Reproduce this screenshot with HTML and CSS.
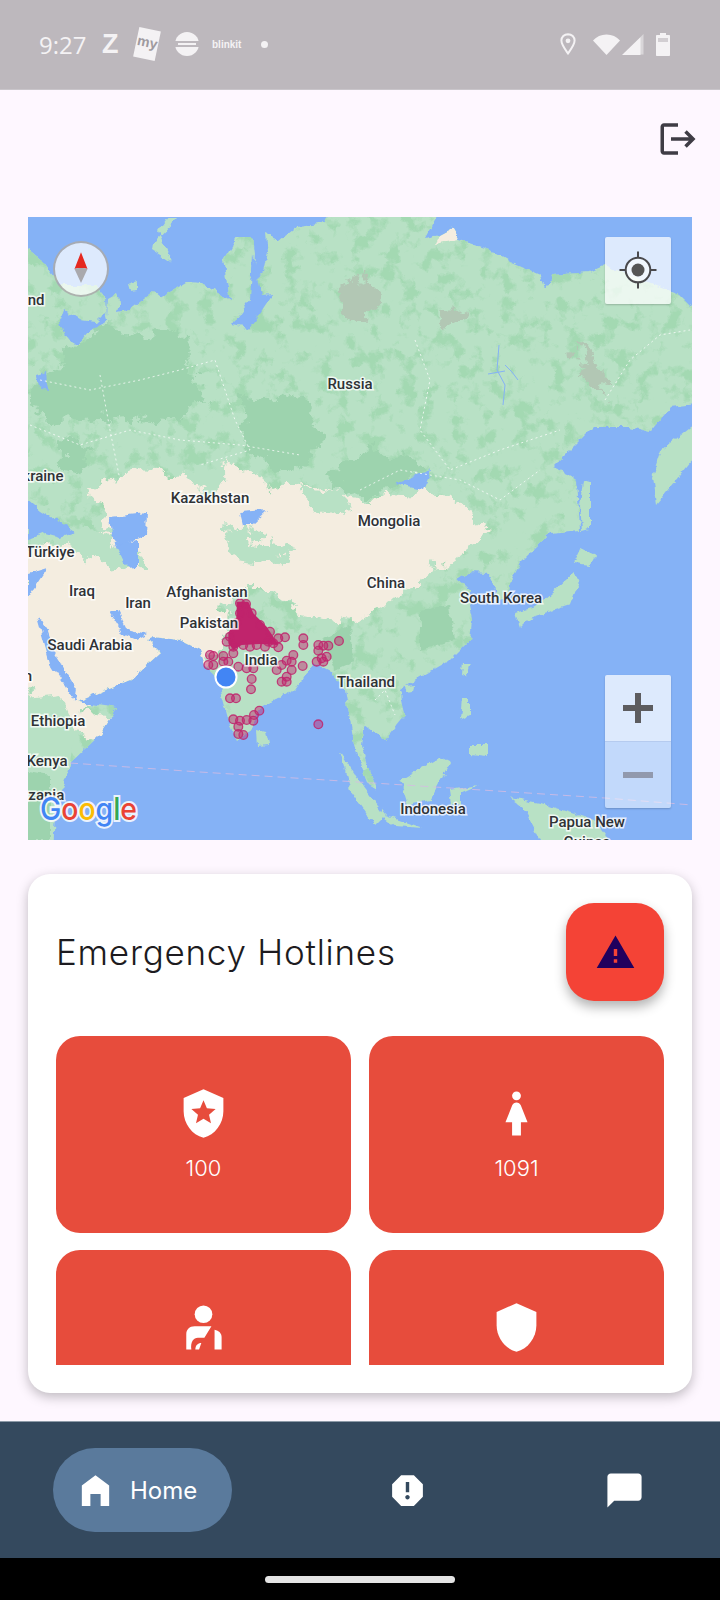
FILE: index.html
```html
<!DOCTYPE html>
<html lang="en">
<head>
    <meta charset="UTF-8">
    <meta name="viewport" content="width=device-width, initial-scale=1.0">
    <title>Emergency Hotlines</title>
    <link rel="stylesheet" href="styles.css">
</head>
<body>
    <div class="status-bar">
        <span class="time">9:27</span>
        <span class="st-z">Z</span>
        <span class="st-my">my</span>
        <svg class="st-ola" viewBox="0 0 24 24"><circle cx="12" cy="12" r="12" fill="#f4f2f4"/><rect x="0" y="9" width="24" height="6" fill="#bdb8bd"/><rect x="3" y="11" width="18" height="2" fill="#f4f2f4"/></svg>
        <span class="st-blinkit">blinkit</span>
        <span class="st-dot"></span>
        <span class="st-spacer"></span>
        <svg class="st-pin" viewBox="0 0 16 22"><path fill="none" stroke="#f4f2f4" stroke-width="2" d="M8 1.200C4.200 1.200 1.400 4 1.400 7.600c0 4.200 4.200 9.400 6.600 12.800 2.400-3.400 6.600-8.600 6.600-12.800C14.600 4 11.800 1.200 8 1.200z"/><circle cx="8" cy="7.800" r="2.400" fill="#f4f2f4"/></svg>
        <svg class="st-wifi" viewBox="0 0 27 21"><path fill="#f4f2f4" d="M13.500 21L0 6.500C3.500 2.500 8 .5 13.500.5S23.500 2.500 27 6.500z"/></svg>
        <svg class="st-signal" viewBox="0 0 22 22"><path fill="#d9d6d9" d="M21.500 1L1 21.500h20.500z"/><path fill="#f4f2f4" d="M18.500 4.200V22H0z"/></svg>
        <svg class="st-battery" viewBox="0 0 14 23"><path fill="#f4f2f4" d="M4 0h6v2h3c.6 0 1 .4 1 1v19c0 .6-.4 1-1 1H1c-.6 0-1-.4-1-1V3c0-.6.4-1 1-1h3z"/><rect x="2" y="5" width="10" height="4" fill="#d2ced2"/></svg>
    </div>

    <main class="content">
        <div class="top-row">
            <svg class="logout" viewBox="0 0 24 24"><path d="M17 7l-1.410 1.410L18.170 11H8v2h10.170l-2.580 2.580L17 17l5-5zM4 5h8V3H4c-1.100 0-2 .9-2 2v14c0 1.100.9 2 2 2h8v-2H4V5z"/></svg>
        </div>

        <div class="map">
            <svg class="map-svg" viewBox="28 217 664 623">
                <defs>
                    <filter id="rough" filterUnits="userSpaceOnUse" x="0" y="190" width="720" height="680">
                        <feTurbulence type="fractalNoise" baseFrequency="0.11" numOctaves="3" seed="4"/>
                        <feDisplacementMap in="SourceGraphic" scale="7" xChannelSelector="R" yChannelSelector="G"/>
                    </filter>
                    <filter id="rough-big" filterUnits="userSpaceOnUse" x="0" y="190" width="720" height="680">
                        <feTurbulence type="fractalNoise" baseFrequency="0.05" numOctaves="4" seed="12"/>
                        <feDisplacementMap in="SourceGraphic" scale="30" xChannelSelector="R" yChannelSelector="G"/>
                    </filter>
                    <filter id="mottle" filterUnits="userSpaceOnUse" x="0" y="190" width="720" height="680" color-interpolation-filters="sRGB">
                        <feTurbulence type="fractalNoise" baseFrequency="0.06" numOctaves="4" seed="9"/>
                        <feColorMatrix values="0 0 0 0 0.64  0 0 0 0 0.85  0 0 0 0 0.70  0 0 0 6 -3.100"/>
                    </filter>
                    <polygon id="eurasia" points="20,245 28,250 43,262 60,285 95,285 106,298 107,317 108,298 117,293 120,300 117,312 130,310 153,292 160,298 187,282 203,283 230,300 223,260 237,237 253,237 255,253 253,290 263,272 267,253 265,233 280,240 297,227 327,223 325,205 443,205 425,238 440,235 453,228 460,240 490,250 510,262 540,275 545,288 553,275 590,272 605,265 640,280 680,295 705,320 705,403 670,407 650,432 630,427 593,427 553,467 567,473 577,480 580,530 550,533 520,563 512,578 507,597 497,600 494,585 488,573 470,572 458,580 470,590 468,600 472,620 470,640 450,660 415,680 400,690 405,715 385,740 365,725 362,745 376,790 368,785 355,750 350,720 345,690 330,672 313,663 295,690 260,707 250,730 238,741 230,725 222,695 217,677 205,665 200,650 180,640 153,637 147,640 160,653 130,680 77,702 117,708 100,735 70,763 55,813 53,850 20,850"/>
                    <clipPath id="land-clip"><use href="#eurasia"/></clipPath>
                </defs>

                <rect class="ocean" x="28" y="217" width="664" height="623"/>

                <g filter="url(#rough)">
                    <use href="#eurasia" class="land"/>
                    <g clip-path="url(#land-clip)">
                        <rect x="20" y="205" width="690" height="650" filter="url(#mottle)"/>
                        <g filter="url(#rough-big)">
                            <polygon class="forest" points="73,350 100,327 187,337 203,403 180,423 120,417 60,423 30,410 37,383"/>
                            <polygon class="forest" points="240,400 300,395 325,440 300,470 250,455"/>
                            <polygon class="forest" points="330,470 380,445 420,470 390,490 345,495"/>
                            <polygon class="forest" points="60,440 90,445 80,470 60,465"/>
                            <polygon class="rock" points="340,285 370,275 385,295 365,325 345,315"/>
                            <polygon class="rock" points="575,340 600,370 610,395 585,380"/>
                            <polygon class="rock" points="435,310 445,300 470,310 450,330"/>
                            <polygon class="cream" points="92,490 103,480 200,467 237,463 280,490 320,487 360,500 420,490 450,493 470,520 493,530 460,553 420,580 393,600 360,622 337,620 300,612 270,590 240,590 225,600 222,640 205,665 175,650 150,650 165,660 130,690 77,712 125,715 105,740 70,730 40,700 20,690 20,550 60,545 110,530"/>
                            <polygon class="land" points="180,470 220,462 232,485 205,495"/>
                            <polygon class="land" points="225,525 265,540 300,548 275,565 235,560"/>
                            <polygon class="land" points="300,490 345,495 350,510 315,512"/>
                            <polygon class="land" points="60,530 110,535 118,545 150,560 130,572 100,560 70,550"/>
                        </g>
                        <polygon class="cream" points="440,235 453,228 460,240 435,245"/>
                        <polygon class="land" points="20,700 60,695 75,730 70,763 55,813 53,850 20,850"/>
                        <polygon class="forest" points="22,770 50,775 50,840 22,840"/>
                        <polygon class="land" points="222,640 270,640 305,640 320,665 295,695 260,712 240,745 225,690"/>
                        <polygon class="forest" points="322,640 350,625 353,662 335,670"/>
                        <polygon class="forest" points="420,610 450,605 455,640 420,650"/>
                    </g>

                    <polygon class="water" points="64,310 80,320 95,322 105,312 107,320 88,332 77,345 65,338 60,322"/>
                    <polygon class="water" points="253,255 262,296 272,295 250,328 232,325 250,300"/>
                    <polygon class="water" points="115,543 138,540 138,567 127,568"/>
                    <polygon class="water" points="110,517 147,513 146,535 120,545 112,535"/>
                    <polygon class="water" points="28,500 40,510 75,532 60,537 45,533 28,540"/>
                    <polygon class="water" points="28,573 48,567 28,597"/>
                    <polygon class="water" points="108,610 117,610 127,630 147,635 137,640 123,634"/>
                    <polygon class="water" points="37,617 43,620 53,650 77,690 75,702 50,663"/>
                    <polygon class="water" points="240,512 268,510 252,525 243,525"/>
                    <polygon class="water" points="423,490 432,470 425,472 395,484"/>
                    <polygon class="water" points="36,375 46,372 48,390 38,388"/>

                    <polygon class="land" points="153,243 177,218 168,218 158,232 172,263 152,250"/>
                    <polygon class="land" points="128,284 137,281 137,290 130,291"/>
                    <polygon class="land" points="583,480 590,482 590,528 582,530 580,505"/>
                    <polygon class="land" points="653,477 662,450 700,420 700,450 657,503"/>
                    <polygon class="land" points="515,613 535,607 575,572 578,585 570,605 530,618 520,628"/>
                    <polygon class="land" points="573,563 580,548 595,555 590,565"/>
                    <polygon class="land" points="257,730 265,732 268,745 258,746"/>
                    <polygon class="land" points="340,752 355,775 385,815 375,825 350,790"/>
                    <polygon class="land" points="400,780 440,757 450,762 430,800 408,805"/>
                    <polygon class="land" points="380,815 400,820 423,828 395,826"/>
                    <polygon class="land" points="450,790 478,785 460,793 460,805 452,803"/>
                    <polygon class="land" points="510,797 540,803 593,820 613,845 540,840 523,807"/>
                    <polygon class="land" points="462,697 470,697 470,715 460,720"/>
                    <polygon class="land" points="470,745 487,745 487,757 470,755"/>
                    <polygon class="land" points="463,663 470,663 466,676 462,675"/>
                    <polygon class="land" points="405,686 415,685 414,692 406,693"/>
                </g>

                <polyline class="river" points="499,345 497,370 505,385 503,405"/>
                <polyline class="river" points="505,365 512,372 518,380"/>
                <polyline class="river" points="488,374 505,371"/>
                <polyline class="border" points="40,380 90,390 140,380 180,370 215,360 235,420 250,450 200,465"/>
                <polyline class="border" points="30,425 80,445 130,430 180,440 240,445 300,455"/>
                <polyline class="border" points="100,375 110,430 120,480"/>
                <polyline class="border" points="415,340 430,380 420,430 450,470 500,450 560,430"/>
                <polyline class="border" points="360,490 400,470 460,480 500,500 540,470"/>
                <polyline class="border" points="605,400 630,360 660,335 690,330"/>
                <polyline class="border" points="375,700 385,690 395,715"/>
                <polyline class="equator" points="70,763 200,772 373,783 605,798 692,805"/>

                <g transform="translate(20 530) scale(.33333)">
                    <polygon class="cluster-fill" points="650,215 685,215 700,250 740,290 760,320 775,345 720,342 665,345 640,360 625,340 625,310 650,260"/>
                    <g class="cluster">
                        <circle cx="570" cy="375" r="13"/><circle cx="580" cy="378" r="13"/><circle cx="610" cy="378" r="13"/><circle cx="565" cy="405" r="13"/><circle cx="580" cy="405" r="13"/><circle cx="610" cy="395" r="13"/><circle cx="625" cy="395" r="13"/><circle cx="655" cy="410" r="13"/><circle cx="680" cy="415" r="13"/><circle cx="700" cy="415" r="13"/>
                        <circle cx="695" cy="447" r="13"/><circle cx="693" cy="478" r="13"/><circle cx="630" cy="505" r="13"/><circle cx="648" cy="505" r="13"/><circle cx="718" cy="542" r="13"/><circle cx="702" cy="555" r="13"/><circle cx="700" cy="572" r="13"/><circle cx="680" cy="570" r="13"/><circle cx="660" cy="572" r="13"/><circle cx="640" cy="568" r="13"/>
                        <circle cx="655" cy="590" r="13"/><circle cx="655" cy="612" r="13"/><circle cx="670" cy="615" r="13"/><circle cx="795" cy="322" r="13"/><circle cx="775" cy="325" r="13"/><circle cx="775" cy="352" r="13"/><circle cx="850" cy="325" r="13"/><circle cx="850" cy="345" r="13"/><circle cx="820" cy="375" r="13"/><circle cx="815" cy="395" r="13"/>
                        <circle cx="800" cy="392" r="13"/><circle cx="785" cy="405" r="13"/><circle cx="815" cy="420" r="13"/><circle cx="770" cy="420" r="13"/><circle cx="800" cy="440" r="13"/><circle cx="785" cy="455" r="13"/><circle cx="800" cy="455" r="13"/><circle cx="848" cy="408" r="13"/><circle cx="895" cy="345" r="13"/><circle cx="910" cy="347" r="13"/>
                        <circle cx="925" cy="347" r="13"/><circle cx="895" cy="362" r="13"/><circle cx="920" cy="380" r="13"/><circle cx="905" cy="385" r="13"/><circle cx="890" cy="395" r="13"/><circle cx="910" cy="395" r="13"/><circle cx="957" cy="333" r="13"/><circle cx="895" cy="583" r="13"/>
                        <circle cx="640" cy="350" r="13"/><circle cx="670" cy="345" r="13"/><circle cx="710" cy="345" r="13"/><circle cx="745" cy="335" r="13"/><circle cx="640" cy="370" r="13"/><circle cx="660" cy="220" r="13"/><circle cx="678" cy="222" r="13"/>
                        <circle cx="630" cy="320" r="13"/><circle cx="650" cy="280" r="13"/><circle cx="660" cy="250" r="13"/><circle cx="695" cy="250" r="13"/><circle cx="720" cy="285" r="13"/><circle cx="750" cy="305" r="13"/><circle cx="735" cy="350" r="13"/><circle cx="690" cy="350" r="13"/><circle cx="760" cy="340" r="13"/><circle cx="620" cy="335" r="13"/>
                    </g>
                </g>

                <circle class="me" cx="226" cy="677" r="10.500"/>

                <text class="label" x="350" y="389">Russia</text>
                <text class="label" x="210" y="503">Kazakhstan</text>
                <text class="label" x="389" y="526">Mongolia</text>
                <text class="label" x="386" y="588">China</text>
                <text class="label" x="501" y="603">South Korea</text>
                <text class="label" x="366" y="687">Thailand</text>
                <text class="label" x="433" y="814">Indonesia</text>
                <text class="label" x="587" y="827">Papua New</text>
                <text class="label" x="587" y="847">Guinea</text>
                <text class="label" x="207" y="597">Afghanistan</text>
                <text class="label" x="209" y="628">Pakistan</text>
                <text class="label" x="138" y="608">Iran</text>
                <text class="label" x="82" y="596">Iraq</text>
                <text class="label" x="90" y="650">Saudi Arabia</text>
                <text class="label" x="261" y="665">India</text>
                <text class="label" x="58" y="726">Ethiopia</text>
                <text class="label" x="47" y="766">Kenya</text>
                <text class="label" x="34" y="800">Tanzania</text>
                <text class="label" x="50" y="557">Türkiye</text>
                <text class="label" x="6" y="618">Egypt</text>
                <text class="label" x="11" y="681">Sudan</text>
                <text class="label" x="20" y="305">Finland</text>
                <text class="label" x="38" y="481">Ukraine</text>

                <text class="google" x="40" y="820" textLength="97" lengthAdjust="spacingAndGlyphs"><tspan class="g-blue">G</tspan><tspan class="g-red">o</tspan><tspan class="g-yellow">o</tspan><tspan class="g-blue">g</tspan><tspan class="g-green">l</tspan><tspan class="g-red">e</tspan></text>
            </svg>

            <div class="compass">
                <svg viewBox="0 0 56 56"><path fill="#e5281f" d="M28 10l-7 18c4-1.500 10-1.500 14 0z"/><path fill="#a9a9ad" d="M21 28c4-1.500 10-1.500 14 0l-7 15z"/></svg>
            </div>
            <div class="map-btn locate">
                <svg viewBox="0 0 40 40"><circle cx="20" cy="20" r="12.300" fill="rgba(255,255,255,0.6)" stroke="#4a4a4d" stroke-width="2"/><circle cx="20" cy="20" r="6.500" fill="#555"/><path stroke="#4a4a4d" stroke-width="2" d="M20 1.500v6M20 32.500v6M1.500 20h6M32.500 20h6"/></svg>
            </div>
            <div class="zoom-ctrl">
                <div class="zoom-in"><span class="bar-h"></span><span class="bar-v"></span></div>
                <div class="zoom-out"><span class="bar-h"></span></div>
            </div>
        </div>

        <section class="card">
            <div class="card-head">
                <h2>Emergency Hotlines</h2>
                <button class="fab">
                    <svg viewBox="0 0 24 24"><path d="M1 21h22L12 2 1 21zm12-3h-2v-2h2v2zm0-4h-2v-4h2v4z"/></svg>
                </button>
            </div>
            <div class="hotlines">
                <div class="tile">
                    <svg viewBox="0 0 24 24"><path d="M12 1L3 5v6c0 5.550 3.840 10.740 9 12 5.160-1.260 9-6.450 9-12V5l-9-4zm2.500 11.590.9 3.880-3.400-2.050-3.400 2.050.9-3.870-3-2.590 3.960-.34L12 6.020l1.540 3.640 3.960.34-3 2.590z"/></svg>
                    <span>100</span>
                </div>
                <div class="tile">
                    <svg viewBox="0 0 24 24"><circle cx="12" cy="4" r="2"/><path d="M13.940 8.310C13.620 7.520 12.850 7 12 7s-1.620.52-1.940 1.310L7 16h3v6h4v-6h3l-3.060-7.690z"/></svg>
                    <span>1091</span>
                </div>
                <div class="tile">
                    <svg viewBox="0 0 24 24"><circle cx="12" cy="6" r="4"/><path d="M4.200 22V15C4.200 13 5.600 11.400 8 11.400H15.600L12.400 16.600H9.500C7.500 16.600 6 18.400 6.500 22Z"/><path d="M8.300 22C8.300 20 9.500 19 11 19L10 22Z"/><path d="M17 13C19 13.500 20.200 14.500 20.200 16.500V22H17Z"/></svg>
                    <span>102</span>
                </div>
                <div class="tile">
                    <svg viewBox="0 0 24 24"><path d="M12 1L3 5v6c0 5.550 3.840 10.740 9 12 5.160-1.260 9-6.450 9-12V5l-9-4z"/></svg>
                    <span>112</span>
                </div>
            </div>
        </section>
    </main>

    <nav class="bottom-nav">
        <div class="nav-item active">
            <svg viewBox="0 0 24 24"><path d="M12 3L4 9v12h5v-7h6v7h5V9z"/></svg>
            <span>Home</span>
        </div>
        <div class="nav-item">
            <svg viewBox="0 0 24 24"><path d="M15.730 3H8.270L3 8.270v7.460L8.270 21h7.460L21 15.730V8.270L15.730 3zM12 17.300c-.72 0-1.300-.58-1.300-1.300 0-.72.58-1.300 1.300-1.300.72 0 1.300.58 1.300 1.300 0 .72-.58 1.300-1.300 1.300zm1-4.300h-2V7h2v6z"/></svg>
        </div>
        <div class="nav-item">
            <svg viewBox="0 0 24 24"><path d="M20 2H4c-1.100 0-2 .9-2 2v18l4-4h14c1.100 0 2-.9 2-2V4c0-1.100-.9-2-2-2z"/></svg>
        </div>
    </nav>
    <div class="gesture-bar"><span class="handle"></span></div>
</body>
</html>
```

FILE: styles.css
```css
* {
    box-sizing: border-box;
}
body {
    margin: 0;
    height: 1600px;
    display: flex;
    flex-direction: column;
    overflow: hidden;
    font-family: Inter, "Liberation Sans", sans-serif;
    background-color: #fef7ff;
}

/* status bar */
.status-bar {
    height: 90px;
    flex-shrink: 0;
    display: flex;
    align-items: center;
    padding: 0 50px 1px 39px;
    background-color: #bdb8bd;
    border-bottom: 1px solid #c9c5ca;
    color: #f4f2f4;
}
.time {
    font-family: "Open Sans", sans-serif;
    font-size: 24px;
    width: 47px;
    margin-right: 16px;
}
.st-z {
    font-family: "Liberation Sans", sans-serif;
    font-weight: bold;
    font-size: 27px;
    width: 18px;
    margin-right: 16px;
}
.st-my {
    width: 22px;
    height: 30px;
    margin-right: 17px;
    background-color: #f4f2f4;
    color: #9f9a9f;
    font-family: "Liberation Sans", sans-serif;
    font-size: 14px;
    font-weight: bold;
    line-height: 26px;
    text-align: center;
    transform: rotate(12deg);
}
.st-ola {
    width: 24px;
    height: 26px;
    margin-right: 13px;
}
.st-blinkit {
    font-family: "Liberation Sans", sans-serif;
    font-size: 10px;
    font-weight: bold;
    width: 26px;
    margin-right: 23px;
}
.st-dot {
    width: 7px;
    height: 7px;
    border-radius: 50%;
    background-color: #f4f2f4;
}
.st-spacer {
    flex: 1;
}
.st-pin {
    width: 16px;
    height: 22px;
    margin-right: 17px;
}
.st-wifi {
    width: 27px;
    height: 21px;
    margin-right: 2px;
}
.st-signal {
    width: 22px;
    height: 22px;
    margin-right: 12px;
}
.st-battery {
    width: 14px;
    height: 23px;
}

/* main */
.content {
    flex: 1;
    padding: 0 28px;
}
.top-row {
    height: 127px;
    display: flex;
    justify-content: flex-end;
    padding-top: 28px;
}
.logout {
    width: 42px;
    height: 42px;
    margin-right: -7px;
    fill: #3f3c45;
}

/* map */
.map {
    position: relative;
    height: 623px;
    overflow: hidden;
    margin-bottom: 34px;
}
.map-svg {
    display: block;
    width: 664px;
    height: 623px;
}
.ocean,
.water {
    fill: #85b2f6;
}
.land {
    fill: #b8e1c5;
}
.forest {
    fill: #9dd3ae;
}
.rock {
    fill: #b2c7b4;
}
.cream {
    fill: #f4ede0;
}
.river {
    fill: none;
    stroke: #85b2f6;
    stroke-width: 1;
}
.border {
    fill: none;
    stroke: rgba(255,255,255,0.75);
    stroke-width: 1;
    stroke-dasharray: 2 3;
}
.equator {
    fill: none;
    stroke: rgba(214,188,226,0.8);
    stroke-width: 1;
    stroke-dasharray: 8 5;
}
.cluster-fill {
    fill: #c0246c;
}
.cluster circle {
    fill: rgba(192,36,108,0.45);
    stroke: rgba(192,36,108,0.85);
    stroke-width: 4;
}
.me {
    fill: #4285f4;
    stroke: #fff;
    stroke-width: 2;
}
.label {
    font-family: Roboto, sans-serif;
    font-weight: 500;
    font-size: 15px;
    text-anchor: middle;
    fill: #2f3236;
    stroke: rgba(255,255,255,0.8);
    stroke-width: 3px;
    paint-order: stroke;
}
.google {
    font-family: Inter, sans-serif;
    font-weight: 500;
    font-size: 31px;
    stroke: rgba(255,255,255,0.85);
    stroke-width: 4px;
    paint-order: stroke;
}
.g-blue {
    fill: #4285f4;
}
.g-red {
    fill: #ea4335;
}
.g-yellow {
    fill: #fbbc05;
}
.g-green {
    fill: #34a853;
}
.compass {
    position: absolute;
    left: 25px;
    top: 24px;
    width: 56px;
    height: 56px;
    border-radius: 50%;
    background-color: rgba(255,255,255,0.72);
    border: 2px solid rgba(120,120,120,0.55);
}
.compass svg {
    display: block;
    width: 52px;
    height: 52px;
}
.map-btn {
    position: absolute;
    top: 20px;
    right: 21px;
    width: 66px;
    height: 67px;
    padding: 13px;
    border-radius: 2px;
    background-color: rgba(255,255,255,0.72);
    box-shadow: 0 1px 2px rgba(0,0,0,0.2);
}
.map-btn svg {
    display: block;
    width: 40px;
    height: 40px;
}
.zoom-ctrl {
    position: absolute;
    right: 21px;
    bottom: 32px;
    width: 66px;
    border-radius: 2px;
    overflow: hidden;
    box-shadow: 0 1px 2px rgba(0,0,0,0.2);
}
.zoom-in,
.zoom-out {
    position: relative;
    height: 66px;
}
.zoom-in {
    height: 67px;
    background-color: rgba(255,255,255,0.72);
    border-bottom: 1px solid #b5cbef;
}
.zoom-out {
    background-color: rgba(255,255,255,0.5);
}
.bar-h,
.bar-v {
    position: absolute;
    left: 18px;
    top: 30px;
    width: 30px;
    height: 6px;
    background-color: #5c5c5f;
}
.bar-v {
    left: 30px;
    top: 18px;
    width: 6px;
    height: 30px;
}
.zoom-out .bar-h {
    background-color: #9199ad;
}

/* hotlines card */
.card {
    height: 519px;
    padding: 29px 28px 28px;
    border-radius: 22px;
    background-color: white;
    box-shadow: 0 4px 12px rgba(0,0,0,0.25);
}
.card-head {
    display: flex;
    align-items: center;
    justify-content: space-between;
    margin-bottom: 35px;
}
.card-head h2 {
    margin: 0;
    font-size: 35px;
    font-weight: 300;
    letter-spacing: 0.75px;
    color: #1d1b20;
}
.fab {
    width: 98px;
    height: 98px;
    padding: 0;
    display: flex;
    align-items: center;
    justify-content: center;
    border: none;
    border-radius: 28px;
    background-color: #f44336;
    box-shadow: 0 6px 12px rgba(0,0,0,0.3);
}
.fab svg {
    width: 41px;
    height: 41px;
    fill: #21005d;
}
.hotlines {
    height: 329px;
    overflow: hidden;
    display: grid;
    grid-template-columns: 1fr 1fr;
    grid-auto-rows: 197px;
    gap: 17px 18px;
}
.tile {
    display: flex;
    flex-direction: column;
    align-items: center;
    justify-content: center;
    gap: 13px;
    border-radius: 24px;
    background-color: #e74c3c;
    color: white;
    font-size: 22px;
    font-weight: 300;
    line-height: 30px;
}
.tile svg {
    width: 53px;
    height: 53px;
    fill: white;
}

/* bottom nav */
.bottom-nav {
    height: 137px;
    flex-shrink: 0;
    display: flex;
    align-items: center;
    justify-content: space-between;
    padding: 0 53px;
    background-color: #34495e;
    border-top: 1px solid #8d9aa8;
}
.nav-item {
    display: flex;
    align-items: center;
    gap: 14px;
    padding: 22px;
    color: white;
    font-size: 24px;
}
.nav-item svg {
    width: 41px;
    height: 41px;
    fill: white;
}
.nav-item.active {
    width: 179px;
    height: 84px;
    border-radius: 42px;
    background-color: #5a7a9c;
}
.gesture-bar {
    height: 42px;
    flex-shrink: 0;
    display: flex;
    justify-content: center;
    padding-top: 18px;
    background-color: black;
}
.handle {
    width: 190px;
    height: 7px;
    border-radius: 4px;
    background-color: #e4e4e4;
}
```
